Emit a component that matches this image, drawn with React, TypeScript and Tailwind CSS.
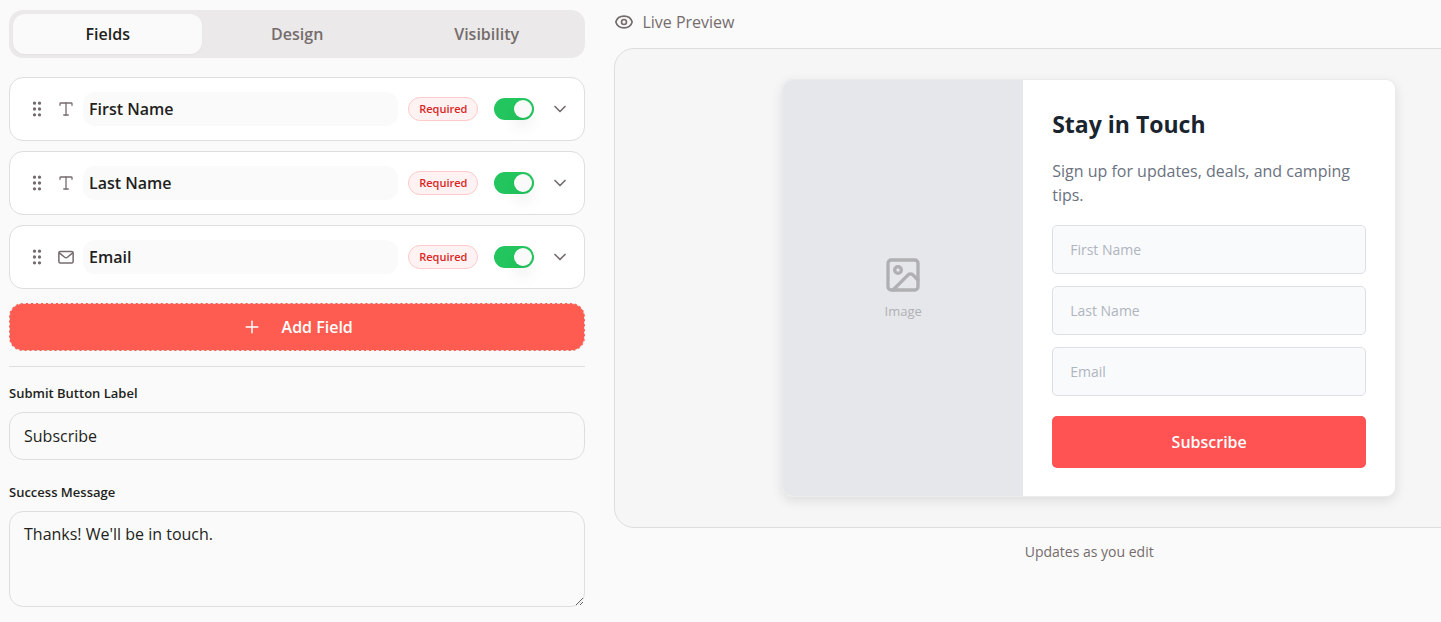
import { useState } from 'react';
import { ChevronDown, GripVertical, Image, Plus, Type } from 'lucide-react';

interface FormField {
  id: string;
  label: string;
  type: 'text' | 'email';
}

const tabs = ['Fields', 'Design', 'Visibility'];

const formFields: FormField[] = [
  { id: 'first-name', label: 'First Name', type: 'text' },
  { id: 'last-name', label: 'Last Name', type: 'text' },
  { id: 'email', label: 'Email', type: 'email' },
];

const MailIcon = () => (
  <svg
    width="18"
    height="18"
    viewBox="0 0 24 24"
    fill="none"
    stroke="currentColor"
    strokeWidth="2"
    strokeLinecap="round"
    strokeLinejoin="round"
  >
    <rect x="2.5" y="4.5" width="19" height="15.5" rx="2" />
    <path d="M3 6.5l7.2 5.8a2.9 2.9 0 0 0 3.6 0L21 6.5" />
  </svg>
);

const EyeIcon = () => (
  <svg
    width="20"
    height="20"
    viewBox="0 0 24 24"
    fill="none"
    stroke="currentColor"
    strokeWidth="2"
    strokeLinejoin="round"
  >
    <path d="M2.2 12C3.6 7.2 7.4 5 12 5s8.4 2.2 9.8 7c-1.4 4.8-5.2 7-9.8 7s-8.4-2.2-9.8-7z" />
    <circle cx="12" cy="12" r="3" />
  </svg>
);

const FieldRow = ({ field }: { field: FormField }) => (
  <li className="flex h-16 items-center rounded-[14px] border border-[#dedede] bg-white pr-3.5 pl-[17px]">
    <button type="button" aria-label={`Move ${field.label}`} className="cursor-grab text-[#756c6c]">
      <GripVertical size={20} strokeWidth={2} />
    </button>
    <span className="ml-2.5 shrink-0 text-[#756c6c]">
      {field.type === 'email' ? <MailIcon /> : <Type size={18} strokeWidth={1.75} />}
    </span>
    <input
      aria-label={`${field.label} label`}
      defaultValue={field.label}
      className="ml-2 h-[34px] min-w-0 flex-1 rounded-xl bg-[#fafafa] px-1.5 text-base font-semibold outline-none"
    />
    <button
      type="button"
      className="ml-2.5 h-6 rounded-full border border-[#fecaca] bg-[#fef2f2] px-2.5 text-[11px] font-semibold text-[#dc2626]"
    >
      Required
    </button>
    <label className="relative ml-4 flex cursor-pointer">
      <input
        type="checkbox"
        defaultChecked
        aria-label={`Require ${field.label}`}
        className="peer h-[22px] w-10 cursor-pointer appearance-none rounded-full bg-[#d6d3d1] checked:bg-[#22c55e]"
      />
      <span className="pointer-events-none absolute top-0.5 left-0.5 h-[18px] w-[18px] rounded-full bg-[#fafafa] shadow-[0_10px_15px_rgba(0,0,0,0.07)] peer-checked:left-5" />
    </label>
    <button type="button" aria-label={`Expand ${field.label}`} className="ml-4 text-[#756c6c]">
      <ChevronDown size={20} strokeWidth={2} />
    </button>
  </li>
);

const Editor = () => {
  const [activeTab, setActiveTab] = useState('Fields');

  return (
    <section className="w-[40vw] shrink-0 pt-2.5">
      <div role="tablist" className="grid h-12 grid-cols-3 rounded-[14px] bg-[#ebe9e9] p-1">
        {tabs.map((tab) => (
          <button
            key={tab}
            type="button"
            role="tab"
            aria-selected={activeTab === tab}
            onClick={() => setActiveTab(tab)}
            className={
              activeTab === tab
                ? 'rounded-xl bg-[#fafafa] text-base font-semibold shadow-[0_1px_2px_rgba(0,0,0,0.04)]'
                : 'rounded-xl text-base font-semibold text-[#756c6c]'
            }
          >
            {tab}
          </button>
        ))}
      </div>
      <ul className="mt-[19px] space-y-2.5">
        {formFields.map((field) => (
          <FieldRow key={field.id} field={field} />
        ))}
      </ul>
      <button
        type="button"
        className="mt-3.5 flex h-12 w-full items-center justify-center gap-5 rounded-[14px] border border-dashed border-[#dedede] bg-[#ff5c51] text-base font-semibold text-white"
      >
        <Plus size={20} strokeWidth={1.75} />
        Add Field
      </button>
      <hr className="mt-[15px] border-[#dedede]" />
      <label htmlFor="submit-label" className="mt-4 block text-[13px] leading-5 font-semibold">
        Submit Button Label
      </label>
      <input
        id="submit-label"
        defaultValue="Subscribe"
        className="mt-[9px] h-12 w-full rounded-[14px] border border-[#dedede] px-3.5 text-base outline-none"
      />
      <label htmlFor="success-message" className="mt-[22px] block text-[13px] leading-5 font-semibold">
        Success Message
      </label>
      <textarea
        id="success-message"
        defaultValue="Thanks! We'll be in touch."
        className="mt-[9px] block h-24 w-full resize-y rounded-[14px] border border-[#dedede] px-3.5 py-2.5 text-base leading-6 outline-none"
      />
    </section>
  );
};

const LivePreview = () => (
  <section className="-mr-[132px] min-w-0 flex-1 pt-2.5">
    <h2 className="flex items-center gap-2 text-base leading-6 text-[#756c6c]">
      <EyeIcon />
      Live Preview
    </h2>
    <div className="mt-3.5 flex justify-center rounded-[20px] border border-[#dedede] bg-[#f6f6f6] px-6 py-[30px]">
      <div className="flex w-[614px] overflow-hidden rounded-[10px] border border-[#ebebeb] bg-white shadow-[0_4px_12px_rgba(0,0,0,0.1)]">
        <div className="flex w-[240px] shrink-0 flex-col items-center justify-center gap-1.5 bg-[#e5e7eb] text-[#b0b0b3]">
          <Image size={40} strokeWidth={2} />
          <span className="text-[13px] leading-5">Image</span>
        </div>
        <form className="min-w-0 flex-1 px-[29px] py-7" onSubmit={(e) => e.preventDefault()}>
          <h3 className="text-[23px] leading-8 font-bold text-[#1a242e]">Stay in Touch</h3>
          <p className="mt-[19px] text-base leading-6 text-[#6b7280]">
            Sign up for updates, deals, and camping tips.
          </p>
          <div className="mt-[18px] space-y-3">
            {formFields.map((field) => (
              <input
                key={field.id}
                type={field.type}
                aria-label={field.label}
                placeholder={field.label}
                className="block h-[49px] w-full rounded-[5px] border border-[#dcdfe4] bg-[#f9fafc] px-[17px] text-sm outline-none placeholder:text-[#b0b5bf]"
              />
            ))}
          </div>
          <button
            type="submit"
            className="mt-5 h-[52px] w-full rounded-[5px] bg-[#ff5252] text-base font-semibold text-white"
          >
            Subscribe
          </button>
        </form>
      </div>
    </div>
    <p className="mt-3.5 text-center text-sm leading-5 text-[#756c6c]">Updates as you edit</p>
  </section>
);

const App = () => (
  <main className="flex min-h-screen gap-[29px] overflow-x-hidden bg-[#fafafa] px-[9px] pb-4 font-['Open_Sans','Noto_Sans',sans-serif] text-[#231f20]">
    <Editor />
    <LivePreview />
  </main>
);

export default App;
